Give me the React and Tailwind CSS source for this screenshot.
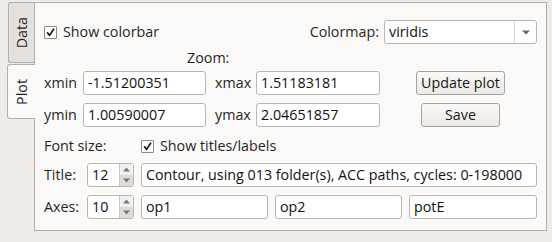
import React from "react";

const font = { fontFamily: '"Open Sans", "Liberation Sans", sans-serif' };

function Check() {
  return (
    <div className="w-[13px] h-[13px] border border-[#8c8884] bg-white rounded-[1px] flex items-center justify-center shrink-0">
      <svg width="9" height="9" viewBox="0 0 9 9">
        <path d="M1.5 4.8 L3.6 7.4 L7.6 1.2" fill="none" stroke="#1a1a1a" strokeWidth="1.7" strokeLinecap="round" strokeLinejoin="round" />
      </svg>
    </div>
  );
}

function Input({ w, value }) {
  return (
    <div
      className={`${w} h-[24px] bg-white border border-[#b9b5b1] rounded-[3px] flex items-center pl-[4px] text-[14.3px] text-[#111] shrink-0 overflow-hidden whitespace-nowrap`}
    >
      {value}
    </div>
  );
}

function Spin({ value }) {
  return (
    <div className="w-[47px] h-[24px] bg-white border border-[#b9b5b1] rounded-[3px] flex shrink-0 overflow-hidden">
      <div className="flex-1 flex items-center pl-[4px] text-[14.3px] text-[#111]">{value}</div>
      <div className="w-[14px] flex flex-col border-l border-[#c9c5c1]">
        <div className="flex-1 flex items-center justify-center bg-[#f3f1ef]">
          <svg width="7" height="5" viewBox="0 0 7 5"><path d="M0 4.5 L3.5 0.5 L7 4.5 Z" fill="#7a7672" /></svg>
        </div>
        <div className="flex-1 flex items-center justify-center bg-[#dedbd8]">
          <svg width="7" height="5" viewBox="0 0 7 5"><path d="M0 0.5 L3.5 4.5 L7 0.5 Z" fill="#7a7672" /></svg>
        </div>
      </div>
    </div>
  );
}

function Button({ w, children }) {
  return (
    <div
      className={`${w} h-[24px] border border-[#a7a39f] rounded-[3px] bg-gradient-to-b from-[#fbfaf9] to-[#ebe8e5] flex items-center justify-center text-[14.3px] text-[#1a1a1a] shrink-0`}
    >
      {children}
    </div>
  );
}

export default function App() {
  return (
    <div className="w-[552px] h-[242px] bg-[#efebe7] flex pt-[2px] text-[#262626]" style={font}>
      <div className="ml-[7px] w-[27px] flex flex-col shrink-0">
        <div className="ml-[1px] w-[27px] h-[61px] bg-[#e4e0dc] border border-[#b3afab] border-r-0 rounded-tl-[3px] rounded-bl-[3px] flex items-center justify-center">
          <span className="[writing-mode:vertical-rl] rotate-180 text-[14.3px] text-[#262626]">Data</span>
        </div>
        <div className="relative z-10 mt-[1px] w-[28px] h-[55px] bg-[#fbf9f7] border border-[#b3afab] border-r-0 rounded-tl-[3px] rounded-bl-[3px] flex items-center justify-center">
          <span className="[writing-mode:vertical-rl] rotate-180 text-[14.3px] text-[#262626]">Plot</span>
        </div>
      </div>
      <div className="w-[513px] h-[229px] bg-[#fbf9f7] border border-[#b3afab] shrink-0 pl-[9px] pr-[9px] pt-[17px] text-[14.3px]">
        <div className="flex items-center h-[24px]">
          <div className="flex items-center gap-[6px]">
            <Check />
            <span>Show colorbar</span>
          </div>
          <div className="flex-1" />
          <span className="mr-[5px]">Colormap:</span>
          <div className="w-[153px] h-[24px] bg-white border border-[#b9b5b1] rounded-[3px] flex">
            <div className="flex-1 flex items-center pl-[4px] text-[#111]">viridis</div>
            <div className="w-[22px] border-l border-[#d5d1cd] flex items-center justify-center">
              <svg width="8" height="5" viewBox="0 0 8 5"><path d="M0 0.5 L4 4.5 L8 0.5 Z" fill="#6a6662" /></svg>
            </div>
          </div>
        </div>
        <div className="h-[27px] flex items-center pl-[143px]">Zoom:</div>
        <div className="flex items-center h-[24px]">
          <span className="w-[39px]">xmin</span>
          <Input w="w-[123px]" value="-1.51200351" />
          <span className="ml-[9px] w-[41px]">xmax</span>
          <Input w="w-[124px]" value="1.51183181" />
          <div className="ml-[36px]">
            <Button w="w-[89px]">Update plot</Button>
          </div>
        </div>
        <div className="flex items-center h-[24px] mt-[8px]">
          <span className="w-[39px]">ymin</span>
          <Input w="w-[123px]" value="1.00590007" />
          <span className="ml-[9px] w-[41px]">ymax</span>
          <Input w="w-[124px]" value="2.04651857" />
          <div className="ml-[41px]">
            <Button w="w-[79px]">Save</Button>
          </div>
        </div>
        <div className="flex items-center h-[22px] mt-[8px]">
          <span className="w-[97px]">Font size:</span>
          <div className="flex items-center gap-[6px]">
            <Check />
            <span>Show titles/labels</span>
          </div>
        </div>
        <div className="flex items-center h-[24px] mt-[6px]">
          <span className="w-[43px]">Title:</span>
          <Spin value="12" />
          <div className="ml-[7px]">
            <Input w="w-[396px]" value="Contour, using 013 folder(s), ACC paths, cycles: 0-198000" />
          </div>
        </div>
        <div className="flex items-center h-[24px] mt-[8px] gap-[7px]">
          <span className="w-[36px]">Axes:</span>
          <Spin value="10" />
          <Input w="w-[127px]" value="op1" />
          <Input w="w-[127px]" value="op2" />
          <Input w="w-[128px]" value="potE" />
        </div>
      </div>
    </div>
  );
}
